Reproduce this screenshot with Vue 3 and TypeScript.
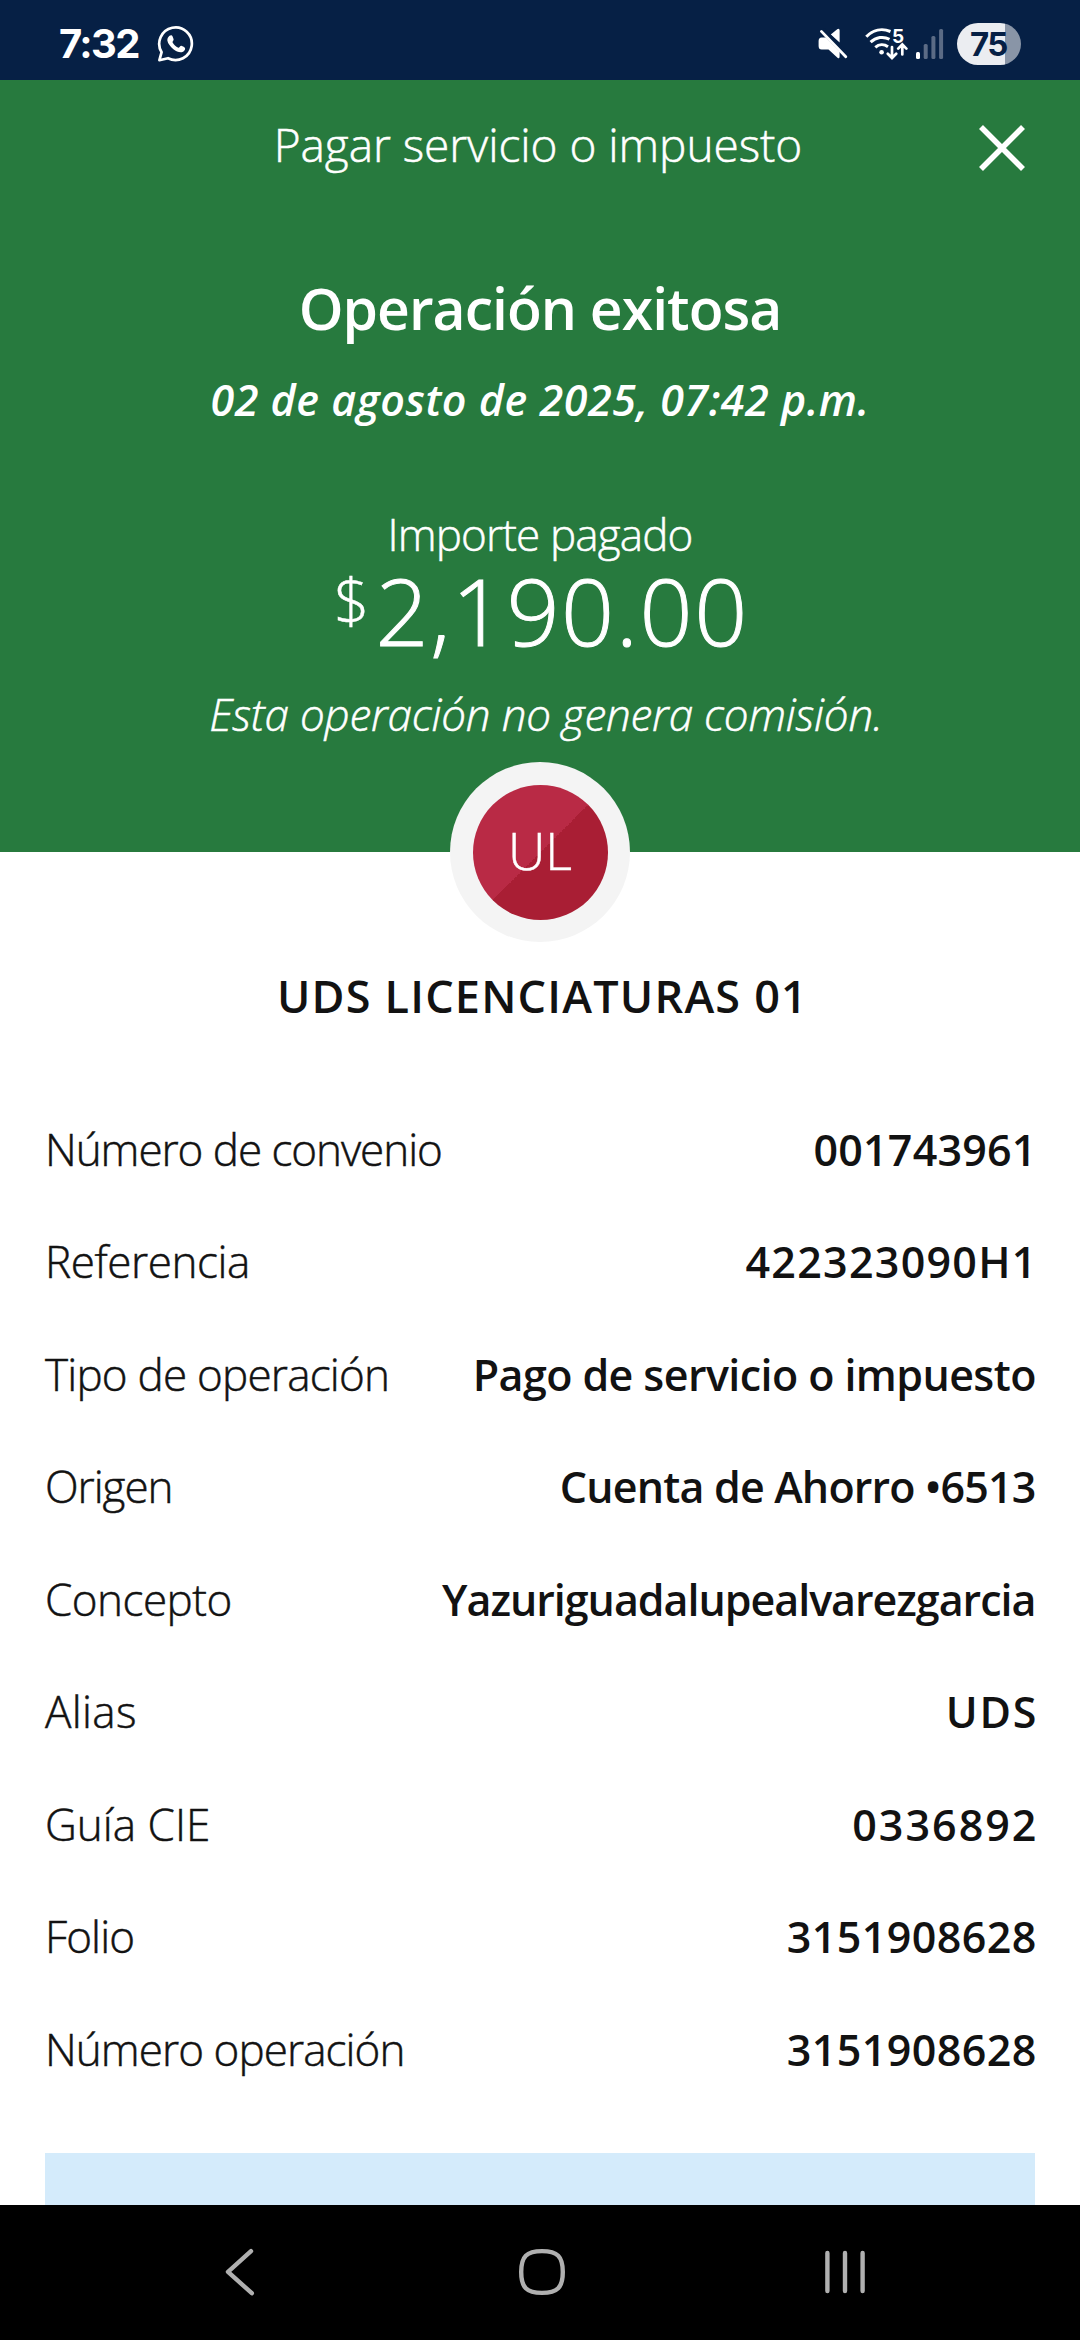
<script setup lang="ts">
interface Detail {
  label: string
  value: string
  labelTracking: number
  valueTracking: number
}

const details: Detail[] = [
  { label: 'Número de convenio', value: '001743961', labelTracking: -1.05, valueTracking: 0.2 },
  { label: 'Referencia', value: '422323090H1', labelTracking: -0.42, valueTracking: 1.27 },
  { label: 'Tipo de operación', value: 'Pago de servicio o impuesto', labelTracking: -0.78, valueTracking: -0.58 },
  { label: 'Origen', value: 'Cuenta de Ahorro •6513', labelTracking: -1.04, valueTracking: -0.81 },
  { label: 'Concepto', value: 'Yazuriguadalupealvarezgarcia', labelTracking: -0.51, valueTracking: -1.02 },
  { label: 'Alias', value: 'UDS', labelTracking: 0.34, valueTracking: 1.77 },
  { label: 'Guía CIE', value: '0336892', labelTracking: 0.02, valueTracking: 2 },
  { label: 'Folio', value: '3151908628', labelTracking: -0.9, valueTracking: 0.41 },
  { label: 'Número operación', value: '3151908628', labelTracking: -0.93, valueTracking: 0.41 },
]

// The trailing letter gap is pulled back so that every value ends on the same edge.
const valueStyle = (d: Detail) => ({
  letterSpacing: `${d.valueTracking}px`,
  marginRight: `${-1.4 - d.valueTracking}px`,
})
</script>

<template>
  <div class="screen">
    <div class="status">
      <div class="status-left">
        <span class="clock">7:32</span>
        <svg class="whatsapp" width="38" height="38" viewBox="0 0 38 38" fill="none">
          <path d="M2.4 35.2 4.6 27.2A16.3 16.3 0 1 1 11 33.2Z" stroke="#fff" stroke-width="2.7" stroke-linejoin="round" />
          <path d="M11.2 12.2c.9-1.3 2.1-2.2 3.3-1.9 1 .3 1.6 2.4 2.1 3.9.4 1.1-1.5 2.3-1.1 3.1 1.3 2.5 3.3 4.4 5.8 5.4.9.3 2-2.3 3.1-1.9 1.4.6 3.5 1.5 3.7 2.4.3 1.6-1.2 3.2-2.7 3.8-2.4.9-6.2-.5-9-2.7-3-2.4-5.5-5.8-6-8.5-.2-1.3.1-2.6.8-3.6Z" fill="#fff" />
        </svg>
      </div>
      <div class="status-right">
        <svg width="30" height="32" viewBox="0 0 30 32">
          <path d="M3.6 9.4H9L21.6 21V28.6Q21.6 31.2 19.5 29.7L10.5 21.6H3.6Q.6 21.6 .6 18V13Q.6 9.4 3.6 9.4Z" fill="#fff" />
          <path d="M12.8 6.4 19.2 1.2Q21.6 0 21.6 2.6V14.6Z" fill="#fff" />
          <path d="M4.6 2.2 29 27.6" stroke="#062045" stroke-width="5.5" />
          <path d="M3.4 3.4 27.8 28.8" stroke="#fff" stroke-width="2.8" stroke-linecap="round" />
        </svg>
        <svg class="wifi" width="44" height="46" viewBox="0 -6 44 46" fill="none" stroke="#fff" stroke-linecap="round">
          <path d="M2.3 9.8C9 2.7 18 1 26.5 4.5M6.6 15.2C12 10 19.5 9 25.5 12.3M11.3 20.3C15 17 20 16.8 24 19.7" stroke-width="3" stroke-linecap="butt" />
          <circle cx="17.6" cy="25.3" r="2.3" fill="#fff" stroke="none" />
          <path d="M28 20V30.5M23.8 26.8 28 31 32.2 26.8M38.3 27.5V18M34.2 21.6 38.3 17.5 42.4 21.6" stroke-width="2.7" />
          <text x="28" y="16" class="band">5</text>
        </svg>
        <svg class="signal" width="28" height="30" viewBox="0 0 28 30">
          <rect x="0" y="23" width="4" height="7" rx="1.5" fill="#fff" />
          <rect x="7.7" y="15" width="4" height="15" rx="1.5" fill="#5b6b85" />
          <rect x="15.4" y="7" width="4" height="23" rx="1.5" fill="#5b6b85" />
          <rect x="23.1" y="0" width="4" height="30" rx="1.5" fill="#5b6b85" />
        </svg>
        <div class="battery">75</div>
      </div>
    </div>

    <header class="hero">
      <div class="titlebar">
        <h1>Pagar servicio o impuesto</h1>
        <svg class="close" width="48" height="48" viewBox="0 0 48 48" stroke="#fff" stroke-width="5.6">
          <path d="M3 3 45 45M45 3 3 45" />
        </svg>
      </div>
      <h2>Operación exitosa</h2>
      <p class="date">02 de agosto de 2025, 07:42 p.m.</p>
      <p class="caption">Importe pagado</p>
      <div class="amount"><span class="currency">$</span><span class="figure">2,190.00</span></div>
      <p class="fee">Esta operación no genera comisión.</p>
    </header>

    <main>
      <div class="avatar"><div class="initials">UL</div></div>
      <h3>UDS LICENCIATURAS 01</h3>
      <dl>
        <div v-for="d in details" :key="d.label" class="row">
          <dt :style="{ letterSpacing: d.labelTracking + 'px' }">{{ d.label }}</dt>
          <dd :style="valueStyle(d)">{{ d.value }}</dd>
        </div>
      </dl>
      <div class="notice"></div>
    </main>

    <nav>
      <svg width="48" height="48" viewBox="0 0 48 48"><path d="M37 3.2 14 23.8 37.8 45.2" /></svg>
      <svg width="48" height="48" viewBox="0 0 48 48"><path d="M24 3.1C39.5 3.1 44.8 8.5 44.8 24S39.5 44.9 24 44.9 3.2 39.5 3.2 24 8.5 3.1 24 3.1Z" /></svg>
      <svg width="48" height="48" viewBox="0 0 48 48"><path d="M6.4 5V43M24 5V43M41.6 5V43" /></svg>
    </nav>
  </div>
</template>

<style>
body {
  margin: 0;
}
</style>

<style scoped>
.screen {
  width: 1080px;
  height: 2340px;
  display: flex;
  flex-direction: column;
  overflow: hidden;
  background: #fff;
  color: #121212;
  font-family: "Open Sans", "Noto Sans", sans-serif;
  white-space: nowrap;
}

h1, h2, h3, p, dl, dt, dd {
  margin: 0;
}

/* Light text carries a hairline outline to firm up its strokes. */
h1, dt, .caption, .amount, .fee, .initials {
  font-weight: 300;
  -webkit-text-stroke: 0.5px currentColor;
}

.status {
  flex: none;
  box-sizing: border-box;
  height: 80px;
  padding: 8px 59px 0 59px;
  display: flex;
  justify-content: space-between;
  align-items: center;
  background: #062045;
  color: #fff;
}

.status-left,
.status-right {
  display: flex;
  align-items: center;
}

.clock {
  font: 700 40px/48px Inter, sans-serif;
  letter-spacing: -1.6px;
  width: 98px;
}

.wifi {
  margin-left: 16px;
}

.band {
  font: 700 19px Inter, sans-serif;
  fill: #fff;
  stroke: none;
}

.signal {
  margin-left: 8px;
}

.battery {
  width: 64px;
  height: 42px;
  margin-left: 13px;
  border-radius: 21px;
  background: linear-gradient(90deg, #ebedf1 48px, #8995a7 48px);
  color: #062045;
  font: 700 33px/42px Inter, sans-serif;
  letter-spacing: -1.5px;
  text-indent: 13px;
}

.hero {
  flex: none;
  box-sizing: border-box;
  height: 772px;
  padding-top: 14px;
  background: #277a3e;
  color: #fff;
  text-align: center;
}

.titlebar {
  height: 100px;
  display: grid;
  grid-template-columns: 160px 1fr 160px;
}

h1 {
  grid-column: 2;
  padding-right: 4px;
  font-size: 46px;
  line-height: 100px;
  letter-spacing: -0.07px;
}

.close {
  margin: 30px 0 0 58px;
}

h2 {
  margin-top: 74px;
  font-size: 57px;
  line-height: 80px;
  font-weight: 600;
  letter-spacing: -0.97px;
}

.date {
  margin-top: 22px;
  font-size: 43px;
  line-height: 60px;
  font-weight: 600;
  font-style: italic;
  letter-spacing: 0.55px;
}

.caption {
  margin-top: 74px;
  font-size: 44px;
  line-height: 60px;
  letter-spacing: -0.86px;
}

.amount {
  padding-left: 3px;
  display: flex;
  justify-content: center;
  align-items: flex-start;
  gap: 6px;
}

.currency {
  font-size: 62px;
  line-height: 72px;
}

.figure {
  font-size: 93px;
  line-height: 92px;
  letter-spacing: 1.6px;
  -webkit-text-stroke-width: 1px;
}

.fee {
  margin-top: 28px;
  padding-left: 12px;
  font-size: 44px;
  line-height: 60px;
  font-style: italic;
  letter-spacing: -0.2px;
}

main {
  height: 1353px;
  display: flex;
  flex-direction: column;
}

.avatar {
  flex: none;
  align-self: center;
  position: relative;
  width: 180px;
  height: 180px;
  margin-top: -90px;
  display: grid;
  place-items: center;
  border-radius: 50%;
  background: #f4f4f4;
}

.initials {
  width: 135px;
  height: 135px;
  border-radius: 50%;
  background: linear-gradient(135deg, #b92a45 50%, #a91e34 50%);
  color: #fff;
  font-size: 52px;
  line-height: 129px;
  text-align: center;
}

h3 {
  margin-top: 23.5px;
  padding-left: 5px;
  font-size: 45px;
  line-height: 60px;
  font-weight: 600;
  letter-spacing: 1.2px;
  text-align: center;
}

dl {
  margin-top: 67px;
  padding: 0 45px;
}

.row {
  height: 112.5px;
  display: flex;
  justify-content: space-between;
  align-items: baseline;
  line-height: 112.5px;
}

dt {
  font-size: 44px;
}

dd {
  font-size: 43px;
  font-weight: 600;
}

.notice {
  flex: 1;
  margin: 48px 45px 0;
  background: #d4ebfb;
}

nav {
  flex: none;
  box-sizing: border-box;
  height: 135px;
  padding: 43px 211px 0 214px;
  display: flex;
  justify-content: space-between;
  background: #000;
}

nav svg {
  fill: none;
  stroke: #b0b0b0;
  stroke-width: 4.4;
  stroke-linecap: round;
  stroke-linejoin: round;
}
</style>
